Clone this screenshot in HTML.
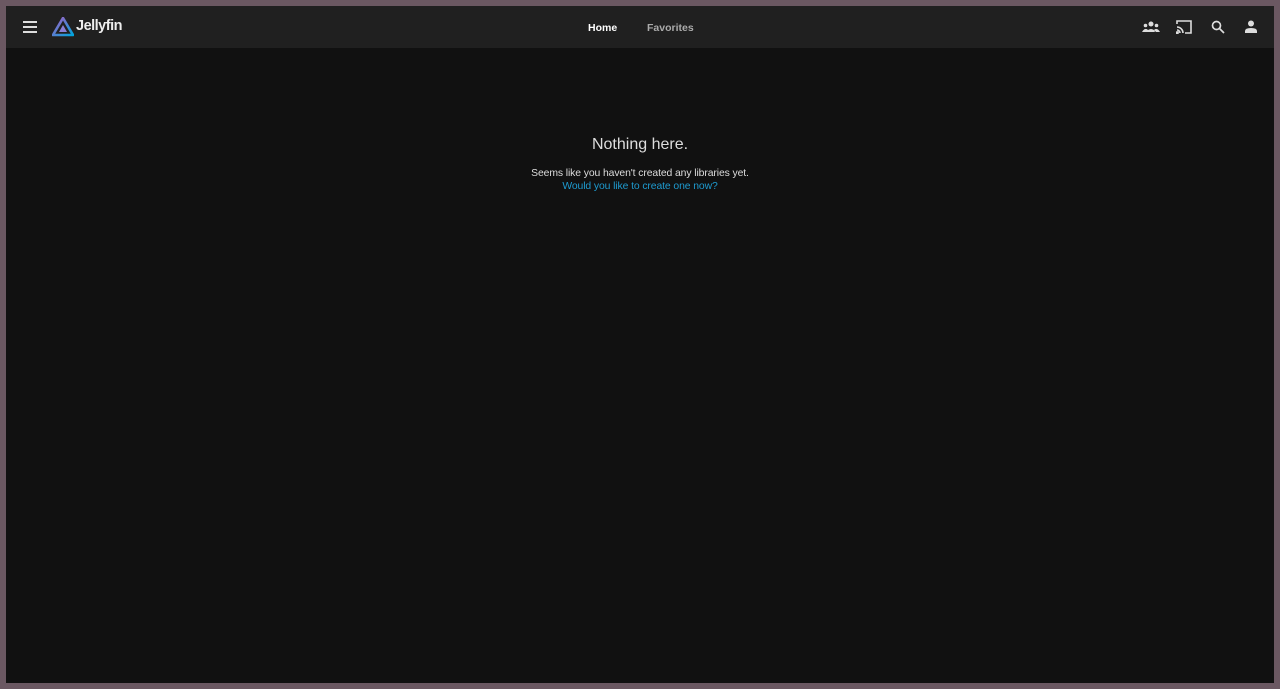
<!DOCTYPE html>
<html><head><meta charset="utf-8"><style>
html,body{margin:0;padding:0;width:1280px;height:689px;background:#6b5862;overflow:hidden;font-family:"Liberation Sans","DejaVu Sans",sans-serif;}
.frame{position:absolute;left:6px;top:6px;width:1268px;height:677px;background:#111;}
.hdr{position:absolute;left:0;top:0;width:100%;height:42px;background:#202020;}
.t{position:absolute;white-space:nowrap;}
</style></head><body>
<div class="frame">
<div class="hdr">
<svg class="t" style="left:17px;top:15px" width="14" height="12"><rect y="0" width="14" height="2" fill="#ddd"/><rect y="5" width="14" height="2" fill="#ddd"/><rect y="10" width="14" height="2" fill="#ddd"/></svg>
<svg class="t" style="left:46px;top:11px" width="22" height="20" viewBox="0 0 22 20"><defs><linearGradient id="g" x1="0" y1="0" x2="1" y2="1"><stop offset="0" stop-color="#aa5cc3"/><stop offset="1" stop-color="#00a4dc"/></linearGradient></defs><path d="M11 1 L21 18 L1 18 Z" fill="none" stroke="url(#g)" stroke-width="2.6" stroke-linejoin="round"/><path d="M11 8 L15 15 L7 15 Z" fill="#8a7fd6"/></svg>
<div class="t" style="left:70px;top:12px;color:#eee;font-size:14.5px;font-weight:bold;letter-spacing:-0.5px">Jellyfin</div>
<div class="t" style="left:582px;top:16px;color:#fff;font-size:10.5px;font-weight:bold">Home</div>
<div class="t" style="left:641px;top:16px;color:#aaa;font-size:10.5px;font-weight:bold">Favorites</div>
<svg class="t" style="left:1136px;top:15px" width="18" height="11" viewBox="0 0 18 11" fill="#ddd"><circle cx="9" cy="3" r="2.5"/><circle cx="3.5" cy="4.5" r="1.8"/><circle cx="14.5" cy="4.5" r="1.8"/><path d="M4 11 Q9 5 14 11Z M0 11 Q3 6 6 9 L5 11Z M18 11 Q15 6 12 9 L13 11Z"/></svg>
<svg class="t" style="left:1170px;top:14px" width="16" height="14" viewBox="0 0 16 14" fill="none" stroke="#ddd" stroke-width="1.6"><path d="M1 4 V1 H15 V13 H9"/><path d="M1 7 A6 6 0 0 1 7 13 M1 10 A3 3 0 0 1 4 13"/><circle cx="1.3" cy="12.7" r=".8" fill="#ddd"/></svg>
<svg class="t" style="left:1205px;top:14px" width="14" height="14" viewBox="0 0 14 14" fill="none" stroke="#ddd" stroke-width="1.7"><circle cx="5.5" cy="5.5" r="4"/><path d="M8.5 8.5 L13 13"/></svg>
<svg class="t" style="left:1239px;top:14px" width="12" height="13" viewBox="0 0 12 13" fill="#ddd"><circle cx="6" cy="3.5" r="3"/><path d="M0 13 V11 Q0 8 6 8 Q12 8 12 11 V13Z"/></svg>
</div>
<div class="t" style="left:0;width:1268px;text-align:center;top:130px;color:#ddd;font-size:16px">Nothing here.</div>
<div class="t" style="left:0;width:1268px;text-align:center;top:162px;color:#ddd;font-size:10.4px;letter-spacing:-0.1px">Seems like you haven't created any libraries yet.</div>
<div class="t" style="left:0;width:1268px;text-align:center;top:175px;color:#1e9bd0;font-size:10.4px;letter-spacing:-0.1px">Would you like to create one now?</div>
</div>
</body></html>
